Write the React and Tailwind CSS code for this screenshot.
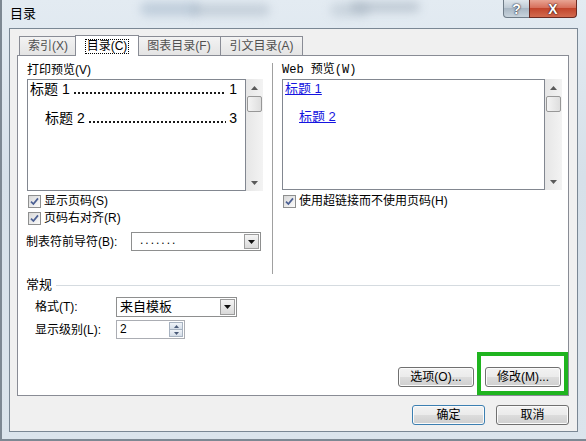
import React from "react";

const btnBase =
  "flex items-center justify-center rounded-[3px] border text-[12px] leading-none shadow-[inset_0_0_0_1px_#fbfbfb] bg-[linear-gradient(#f2f2f2,#ebebeb_50%,#dddddd_50%,#cfcfcf)]";

const CheckBox = () => (
  <span className="flex h-[13px] w-[13px] shrink-0 items-center justify-center border border-[#8e8f8f] bg-[linear-gradient(135deg,#d8d8d8,#fbfbfb)]">
    <svg width="9" height="9" viewBox="0 0 9 9">
      <path d="M1 4.6 L3.4 7 L8 1.4" fill="none" stroke="#4b5f93" strokeWidth="1.7" />
    </svg>
  </span>
);

const ComboArrow = () => (
  <span className="m-px flex w-[15px] items-center justify-center border border-[#9c9c9c] bg-[linear-gradient(#f5f5f5,#d9d9d9)]">
    <svg width="7" height="4" viewBox="0 0 7 4">
      <path d="M0 0h7L3.5 4z" fill="#111" />
    </svg>
  </span>
);

const ScrollBar = () => (
  <div className="flex h-full w-[17px] flex-col items-center bg-[linear-gradient(90deg,#e6e6e6,#f3f3f3)]">
    <div className="flex h-[17px] items-center justify-center">
      <svg width="7" height="4" viewBox="0 0 7 4">
        <path d="M3.5 0L7 4H0z" fill="#5a5a5a" />
      </svg>
    </div>
    <div className="h-[16px] w-[15px] rounded-[2px] border border-[#979797] bg-[linear-gradient(90deg,#f4f4f4,#dedede)]" />
    <div className="flex-1" />
    <div className="flex h-[17px] items-center justify-center">
      <svg width="7" height="4" viewBox="0 0 7 4">
        <path d="M0 0h7L3.5 4z" fill="#5a5a5a" />
      </svg>
    </div>
  </div>
);

// dot leader drawn as a repeating pattern along the baseline
const TocLine = ({ label, page, indent }) => (
  <div className={`flex h-[18px] items-end pr-[8px] text-[14px] leading-[18px] ${indent}`}>
    <span className="shrink-0">{label}</span>
    <span className="mx-[3px] mb-[4px] h-[2px] flex-1 bg-[radial-gradient(circle,#1a1a1a_40%,transparent_60%)] bg-[length:4px_2px]" />
    <span className="shrink-0">{page}</span>
  </div>
);

const Tab = ({ children, selected }) =>
  selected ? (
    <div className="relative z-10 -mx-[2px] flex h-[21px] w-[64px] items-start justify-center border border-b-0 border-[#898c95] bg-white pt-[3px]">
      <span className="border border-dotted border-black px-px leading-[13px]">{children}</span>
    </div>
  ) : (
    <div className="-ml-px mb-px flex h-[19px] items-center justify-center border border-b-0 border-[#898c95] bg-[linear-gradient(#f3f3f3,#e4e4e4)] text-[#505050] first:ml-0">
      {children}
    </div>
  );

export default function App() {
  return (
    <div className="relative h-[441px] w-[586px] overflow-hidden bg-[linear-gradient(#e3ebf2,#d6e0e9_40%,#dbe4ec)] font-['Liberation_Sans','Noto_Sans_CJK_SC',sans-serif] text-[12px] text-black shadow-[inset_2px_-2px_0_#7d8893]">
      {/* blurred glass backdrop */}
      <div className="absolute left-[140px] top-[2px] h-[14px] w-[60px] rounded-full bg-[#8fa6bd] opacity-40 blur-[5px]" />
      <div className="absolute left-[190px] top-[4px] h-[12px] w-[80px] rounded-full bg-[#9aa9b8] opacity-40 blur-[5px]" />
      <div className="absolute left-[330px] top-[3px] h-[14px] w-[40px] rounded-full bg-[#a8b6c3] opacity-40 blur-[5px]" />
      <div className="absolute left-[350px] top-[2px] h-[10px] w-[70px] rounded-full bg-[#8796a6] opacity-40 blur-[5px]" />

      {/* title bar */}
      <div className="relative flex h-[28px] items-start">
        <div className="pl-[10px] pt-[6px] text-[13px] leading-[16px]">目录</div>
        <div className="ml-auto mr-[9px] flex">
          <div className="flex h-[18px] w-[27px] items-center justify-center rounded-bl-[4px] border border-t-0 border-[#6f7c88] bg-[linear-gradient(#dfe6ec,#bcc8d3_50%,#a9b7c4_50%,#c8d3dc)] text-[14px] font-bold leading-none text-white [text-shadow:0_0_2px_#223,0_0_1px_#223]">
            ?
          </div>
          <div className="-ml-px flex h-[18px] w-[48px] items-center justify-center rounded-br-[4px] border border-t-0 border-[#6b2a22] bg-[linear-gradient(#e8a493,#d7705b_45%,#c2452c_50%,#d26a4f)] text-[14px] font-bold leading-none text-white [text-shadow:0_0_2px_#301010,0_0_1px_#301010]">
            X
          </div>
        </div>
      </div>

      {/* client area */}
      <div className="relative ml-[9px] flex h-[404px] w-[569px] flex-col border border-[#7a8794] bg-[#f0f0f0] px-[7px] pt-[6px]">
        {/* tabs */}
        <div className="relative z-10 flex h-[21px] items-end pl-[2px]">
          <div className="w-[58px]">
            <Tab>索引(X)</Tab>
          </div>
          <Tab selected>目录(C)</Tab>
          <div className="w-[84px]">
            <Tab>图表目录(F)</Tab>
          </div>
          <div className="-ml-px w-[83px]">
            <Tab>引文目录(A)</Tab>
          </div>
        </div>

        {/* tab panel */}
        <div className="-mt-px flex h-[341px] w-[552px] flex-col border border-[#898c95] bg-white">
          <div className="flex items-start pt-[7px]">
            {/* left column */}
            <div className="ml-[9px] flex w-[236px] flex-col">
              <div className="h-[14px] leading-[14px]">打印预览(V)</div>
              <div className="mt-[2px] flex h-[112px]">
                <div className="w-[219px] border border-[#828790] bg-white">
                  <TocLine label="标题 1" page="1" indent="pl-[2px]" />
                  <div className="mt-[11px]">
                    <TocLine label="标题 2" page="3" indent="pl-[17px]" />
                  </div>
                </div>
                <ScrollBar />
              </div>
              <div className="mt-[2px] flex h-[16px] items-center gap-[3px] pl-px">
                <CheckBox />
                <span>显示页码(S)</span>
              </div>
              <div className="mt-px flex h-[16px] items-center gap-[3px] pl-px">
                <CheckBox />
                <span>页码右对齐(R)</span>
              </div>
              <div className="mt-[6px] flex h-[19px] items-center">
                <span className="-ml-px w-[105px]">制表符前导符(B):</span>
                <div className="flex h-[19px] w-[130px] border border-[#8e8f8f] bg-white">
                  <span className="flex-1 pl-[8px] leading-[15px] tracking-[2px]">.......</span>
                  <ComboArrow />
                </div>
              </div>
            </div>

            {/* separator */}
            <div className="ml-[9px] h-[211px] w-px bg-[#a0a0a0]" />

            {/* right column */}
            <div className="ml-[9px] flex w-[280px] flex-col">
              <div className="h-[14px] font-['Liberation_Mono','Noto_Sans_CJK_SC',monospace] leading-[14px]">
                Web 预览(W)
              </div>
              <div className="mt-[2px] flex h-[111px]">
                <div className="w-[263px] border border-[#828790] bg-white text-[13px] text-[#1515e0]">
                  <div className="h-[18px] pl-[2px] leading-[18px]">
                    <span className="underline">标题 1</span>
                  </div>
                  <div className="mt-[10px] h-[18px] pl-[16px] leading-[18px]">
                    <span className="underline">标题 2</span>
                  </div>
                </div>
                <ScrollBar />
              </div>
              <div className="mt-[3px] flex h-[16px] items-center gap-[3px] pl-px">
                <CheckBox />
                <span>使用超链接而不使用页码(H)</span>
              </div>
            </div>
          </div>

          {/* 常规 group */}
          <div className="mt-[4px] flex h-[14px] items-center pl-[8px] pr-[8px]">
            <span className="text-[13px] leading-[14px]">常规</span>
            <div className="ml-[4px] h-px flex-1 bg-[#d5dbe0]" />
          </div>
          <div className="mt-[5px] flex h-[20px] items-center pl-[17px]">
            <span className="w-[81px]">格式(T):</span>
            <div className="flex h-[20px] w-[121px] border border-[#8e8f8f] bg-white">
              <span className="flex-1 pl-[3px] text-[13px] leading-[17px]">来自模板</span>
              <ComboArrow />
            </div>
          </div>
          <div className="mt-[3px] flex h-[19px] items-center pl-[17px]">
            <span className="w-[81px]">显示级别(L):</span>
            <div className="flex h-[19px] w-[69px] border border-[#abadb3] bg-white">
              <span className="flex-1 pl-[3px] leading-[17px]">2</span>
              <div className="m-px flex w-[14px] flex-col">
                <div className="flex flex-1 items-center justify-center border border-[#a7b2c0] bg-[linear-gradient(#f0f4f9,#d4dde8)]">
                  <svg width="5" height="3" viewBox="0 0 5 3">
                    <path d="M2.5 0L5 3H0z" fill="#4a5a78" />
                  </svg>
                </div>
                <div className="flex flex-1 items-center justify-center border border-t-0 border-[#a7b2c0] bg-[linear-gradient(#f0f4f9,#d4dde8)]">
                  <svg width="5" height="3" viewBox="0 0 5 3">
                    <path d="M0 0h5L2.5 3z" fill="#4a5a78" />
                  </svg>
                </div>
              </div>
            </div>
          </div>

          <div className="mt-[28px] flex justify-end gap-[11px] pr-[7px]">
            <div className={`${btnBase} h-[20px] w-[76px] border-[#707070]`}>选项(O)...</div>
            <div className={`${btnBase} h-[20px] w-[76px] border-[#707070]`}>修改(M)...</div>
          </div>
        </div>

        {/* OK / Cancel */}
        <div className="mt-[9px] flex justify-end gap-[11px] pr-[1px]">
          <div className={`${btnBase} h-[20px] w-[73px] border-[#3c7fb1] shadow-[inset_0_0_0_1px_#7fd3f5]`}>确定</div>
          <div className={`${btnBase} h-[20px] w-[73px] border-[#707070]`}>取消</div>
        </div>
      </div>

      {/* annotation highlight */}
      <div className="absolute left-[477px] top-[352px] h-[43px] w-[91px] border-[4px] border-[#1fb41f]" />
    </div>
  );
}
